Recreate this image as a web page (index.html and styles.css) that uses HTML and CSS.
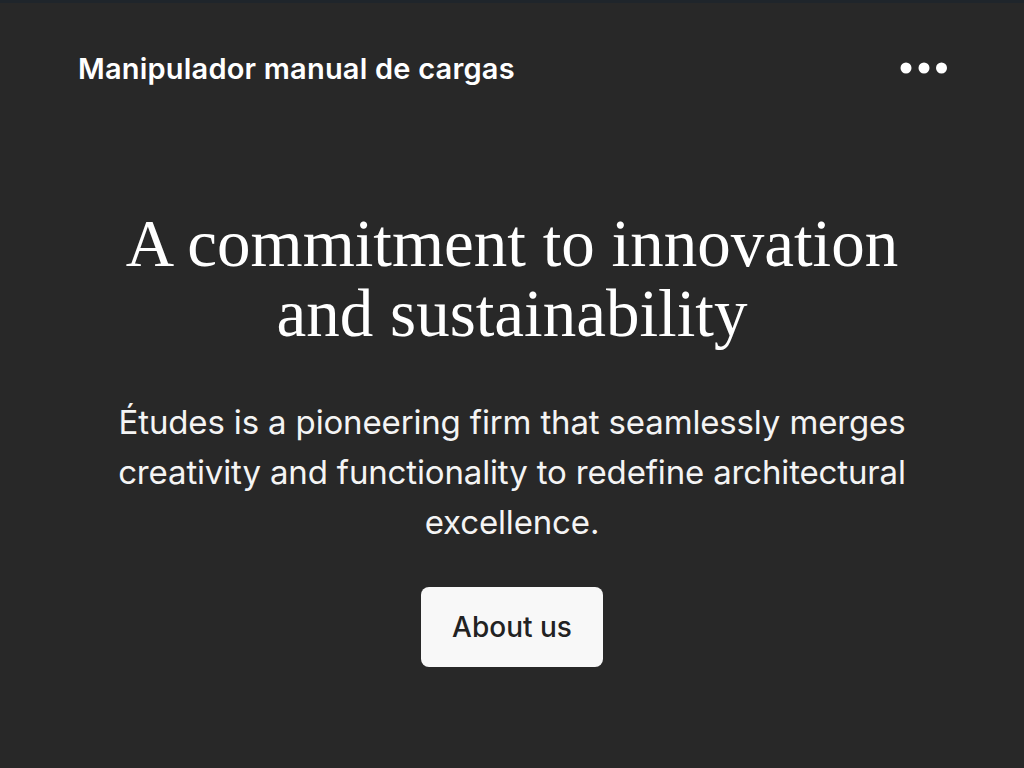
FILE: index.html
```html
<!DOCTYPE html>
<html lang="en">
<head>
<meta charset="utf-8">
<title>Manipulador manual de cargas</title>
<link rel="stylesheet" href="styles.css">
</head>
<body>
<div class="topline"></div>
<header class="header">
  <div class="brand">Manipulador manual de cargas</div>
  <button class="menu" aria-label="More">
    <svg width="48" height="12" viewBox="0 0 48 12"><circle cx="6" cy="6" r="5.5" fill="#fff"/><circle cx="24" cy="6" r="5.5" fill="#fff"/><circle cx="41.5" cy="6" r="5.5" fill="#fff"/></svg>
  </button>
</header>
<main class="hero">
  <h1 class="title">A commitment to innovation<br>and sustainability</h1>
  <p class="lead">Études is a pioneering firm that seamlessly merges creativity and functionality to redefine architectural excellence.</p>
  <a class="btn" href="#">About us</a>
</main>
</body>
</html>
```
FILE: styles.css
```css
html, body {
  margin: 0;
  padding: 0;
  background: #282828;
  height: 100%;
  overflow: hidden;
}
body {
  font-family: Inter, "Noto Sans", sans-serif;
  color: #fff;
}
.topline {
  height: 3px;
  background: #1f252b;
}
.header {
  display: flex;
  align-items: center;
  justify-content: space-between;
  height: 130px;
  padding: 0 76px 0 78px;
}
.brand {
  font-size: 29px;
  font-weight: 600;
  letter-spacing: 0.2px;
}
.menu {
  background: none;
  border: 0;
  padding: 0;
  display: flex;
}
.hero {
  display: flex;
  flex-direction: column;
  align-items: center;
  text-align: center;
  padding-top: 75px;
}
.title {
  margin: 0;
  font-family: "Liberation Serif", serif;
  font-weight: 400;
  font-size: 67px;
  line-height: 70px;
}
.lead {
  margin: 49px 0 0;
  width: 840px;
  font-size: 33px;
  line-height: 50px;
  font-weight: 400;
  letter-spacing: -0.15px;
  color: #f4f4f4;
}
.btn {
  margin-top: 40px;
  display: flex;
  align-items: center;
  justify-content: center;
  width: 182px;
  height: 80px;
  box-sizing: border-box;
  background: #f8f8f8;
  color: #222;
  border-radius: 8px;
  font-size: 28px;
  font-weight: 500;
  letter-spacing: 0;
  text-decoration: none;
}
```
